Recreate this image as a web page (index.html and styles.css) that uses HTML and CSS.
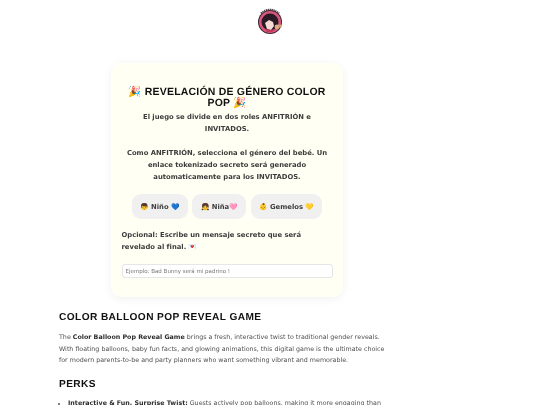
FILE: index.html
```html
<!DOCTYPE html>
<html lang="es">
<head>
<meta charset="utf-8">
<title>Revelación de género</title>
<link rel="stylesheet" href="styles.css">
</head>
<body>
<div class="sheet">
<header class="top">
<svg class="logo" width="28" height="28" viewBox="0 0 28 28">
<circle cx="14" cy="15" r="12" fill="#3a2530"/>
<circle cx="14" cy="15" r="11" fill="#d8587c"/>
<circle cx="14" cy="15" r="8.5" fill="#2a1a26"/>
<path d="M9 16l4-3 4 2 1 4-3 4-4-1z" fill="#f6dcd2"/>
<path d="M9 22l6 1 4-1-3 3h-5z" fill="#c5385c"/>
<circle cx="21" cy="20" r="2.4" fill="#dcae86"/>
<circle cx="24" cy="19" r="1.800" fill="#d0a078"/>
<path d="M5 6.500Q14-1 23 6.500" fill="none" stroke="#4a3a44" stroke-width="2.200" stroke-dasharray="1.300 .6"/>
</svg>
</header>
<main class="page">
<section class="card">
<h1 class="card-title">🎉 REVELACIÓN DE GÉNERO COLOR POP 🎉</h1>
<p class="intro">El juego se divide en dos roles ANFITRIÓN e INVITADOS.<br><br>Como ANFITRIÓN, selecciona el género del bebé. Un enlace tokenizado secreto será generado automaticamente para los INVITADOS.</p>
<div class="choices">
<button class="choice">👦 Niño 💙</button>
<button class="choice">👧 Niña🩷</button>
<button class="choice">👶 Gemelos 💛</button>
</div>
<p class="optional">Opcional: Escribe un mensaje secreto que será revelado al final. 💌</p>
<input class="secret" placeholder="Ejemplo: Bad Bunny será mi padrino !">
</section>
<article class="copy">
<h2>COLOR BALLOON POP REVEAL GAME</h2>
<p>The <strong>Color Balloon Pop Reveal Game</strong> brings a fresh, interactive twist to traditional gender reveals. With floating balloons, baby fun facts, and glowing animations, this digital game is the ultimate choice for modern parents-to-be and party planners who want something vibrant and memorable.</p>
<h2>PERKS</h2>
<ul>
<li><strong>Interactive &amp; Fun, Surprise Twist:</strong> Guests actively pop balloons, making it more engaging than traditional reveals.</li>
</ul>
</article>
</main>
</div>
</body>
</html>
```
FILE: styles.css
```css
* { box-sizing: border-box; }
html, body { margin: 0; background: #fff; overflow: hidden; }
body { height: 405px; font-family: "DejaVu Sans", sans-serif; text-rendering: geometricPrecision; }
.sheet { filter: blur(.25px); }
.top { display: flex; justify-content: center; padding-top: 7px; height: 63px; }
.page { width: 332px; margin-left: 59px; }
.card { width: 232px; margin-left: 52px; height: 234px; padding: 24px 10.5px 0; background: #fffff4; border-radius: 10px; box-shadow: 0 2px 10px rgba(0,0,0,.06); }
.card-title { margin: 0 0 2px; font: bold 10.5px/11px "Liberation Sans", sans-serif; letter-spacing: .2px; text-align: center; color: #111; }
.intro { margin: 0; font-size: 6.8px; font-weight: bold; line-height: 12px; text-align: center; color: #3c3c3c; }
.choices { display: flex; justify-content: center; gap: 4.500px; margin: 11px 0 10px; }
.choice { height: 25px; padding: 0 8.500px; border: 0; border-radius: 9px; background: #f0f0f0; font: bold 6.8px "DejaVu Sans", sans-serif; color: #3c3c3c; text-rendering: geometricPrecision; }
.optional { margin: 0 0 10.500px; font-size: 6.8px; font-weight: bold; line-height: 12px; color: #3c3c3c; }
.secret { display: block; width: 100%; height: 14px; padding: 0 3px; border: 1px solid #e6e6e6; border-radius: 3px; background: #fff; font: 5.500px "DejaVu Sans", sans-serif; }
.secret::placeholder { color: #777; }
.copy { padding-top: 3px; color: #505050; font-size: 6.33px; line-height: 11.7px; }
.copy h2 { margin: 11px 0 7px; font: bold 10.13px/14px "Liberation Sans", sans-serif; letter-spacing: .42px; color: #111; }
.copy p { margin: 0 0 9px; }
.copy strong { color: #2c2c2c; }
.copy ul { margin: 0; padding-left: 9px; line-height: 10.500px; }
```
